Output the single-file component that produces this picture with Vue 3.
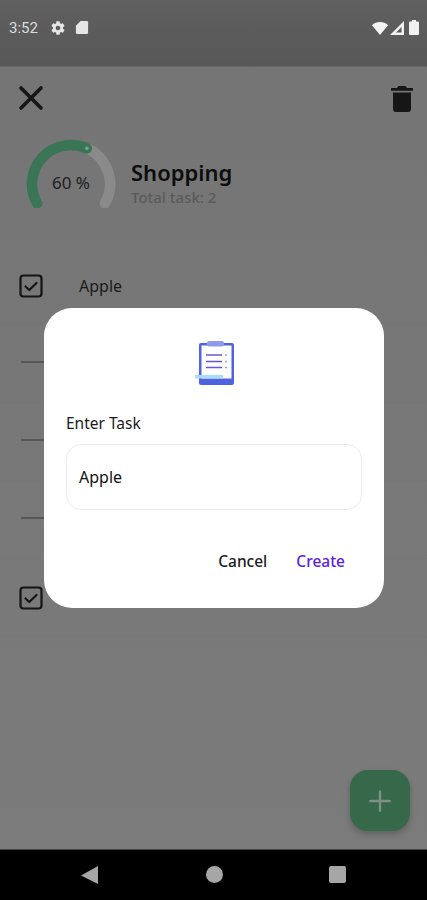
<script setup>
const rows = ['check', 'dash', 'dash', 'dash', 'check']
</script>

<template>
  <div class="phone">
    <header class="status">
      <span class="time">3:52</span>
      <svg class="ic gear" viewBox="0 0 24 24" width="16" height="16"><path fill="#e6e6e6" d="M19.4 13c.04-.33.06-.66.06-1s-.02-.67-.06-1l2.1-1.65c.2-.15.25-.42.12-.64l-2-3.46c-.12-.22-.38-.3-.6-.22l-2.5 1c-.52-.4-1.08-.73-1.7-.98l-.37-2.65A.5.5 0 0 0 14 2h-4a.5.5 0 0 0-.49.42L9.13 5.07c-.62.25-1.18.59-1.7.98l-2.5-1a.5.5 0 0 0-.6.22l-2 3.46c-.13.22-.07.49.12.64L4.55 11c-.04.33-.07.66-.07 1s.03.67.07 1l-2.1 1.65c-.2.15-.25.42-.12.64l2 3.46c.12.22.38.3.6.22l2.5-1c.52.4 1.08.73 1.7.98l.38 2.65c.04.24.25.42.49.42h4c.24 0 .45-.18.49-.42l.38-2.65c.62-.25 1.18-.59 1.7-.98l2.5 1c.22.08.48 0 .6-.22l2-3.46a.5.5 0 0 0-.12-.64L19.4 13zM12 15.5a3.5 3.5 0 1 1 0-7 3.5 3.5 0 0 1 0 7z"/></svg>
      <svg class="ic sd" viewBox="0 0 14 16" width="14" height="15"><path fill="#e6e6e6" d="M5.5 1H12a1.5 1.5 0 0 1 1.500 1.500v11A1.500 1.500 0 0 1 12 15H2a1.500 1.500 0 0 1-1.500-1.500V6z"/></svg>
      <span class="grow"></span>
      <svg class="wifi" viewBox="0 0 16 13" width="16" height="13"><path fill="#f2f2f2" d="M0 3.200C2 1.200 5 0 8 0s6 1.200 8 3.200L8 13z"/></svg>
      <svg class="signal" viewBox="0 0 14 14" width="14" height="14"><path fill="#f2f2f2" d="M14 0v14H0z"/><path fill="#5a5a5a" d="M11.500 6v5.500H6z"/></svg>
      <svg class="battery" viewBox="0 0 10 15" width="10" height="15"><path fill="#f2f2f2" d="M3 0h4v1.500h2a1 1 0 0 1 1 1V14a1 1 0 0 1-1 1H1a1 1 0 0 1-1-1V2.500a1 1 0 0 1 1-1h2z"/></svg>
    </header>

    <main class="page">
      <div class="topbar">
        <svg viewBox="0 0 26 26" width="26" height="26"><path d="M3 3l20 20M23 3L3 23" stroke="#161616" stroke-width="3.600" stroke-linecap="round" fill="none"/></svg>
        <svg viewBox="0 0 24 28" width="24" height="28"><path fill="#161616" d="M8.500 1h7l1.500 2h6v2.800H1V3h6zM3 7.500h18V24a3 3 0 0 1-3 3H6a3 3 0 0 1-3-3z"/></svg>
      </div>

      <section class="summary">
        <div class="gauge">
          <svg viewBox="0 0 100 74" width="100" height="74">
            <path d="M65.900 14.400A39 39 0 0 1 83.800 69.500" fill="none" stroke="#8a8a8a" stroke-width="10.500" stroke-linecap="round"/>
            <path d="M16.200 69.500A39 39 0 0 1 65.900 14.400" fill="none" stroke="#3a7555" stroke-width="10.500" stroke-linecap="round"/>
            <circle cx="65.900" cy="14.400" r="1.800" fill="#7fa08e"/>
          </svg>
          <span class="pct">60 %</span>
        </div>
        <div class="titles">
          <h1>Shopping</h1>
          <p>Total task: 2</p>
        </div>
      </section>

      <ul class="rows">
        <li v-for="(row, i) in rows" :key="i" class="row">
          <svg v-if="row === 'check'" viewBox="0 0 24 24" width="24" height="24">
            <rect x="1.500" y="1.500" width="21" height="21" rx="3" fill="none" stroke="#141414" stroke-width="2.200"/>
            <path d="M6.500 12.500l3.800 3.500 7.200-7" fill="none" stroke="#141414" stroke-width="2.200" stroke-linecap="round" stroke-linejoin="round"/>
          </svg>
          <span v-else class="dash"></span>
          <span v-if="i === 0" class="label">Apple</span>
        </li>
      </ul>

      <button class="fab" aria-label="Add">
        <svg viewBox="0 0 24 24" width="22" height="22"><path d="M12 1.500v21M1.500 12h21" stroke="#7f9187" stroke-width="2.600" stroke-linecap="round"/></svg>
      </button>
    </main>

    <nav class="nav">
      <svg viewBox="0 0 18 18" width="18" height="18"><path fill="#a6a6a6" d="M17 0v18L0 9.500z"/></svg>
      <span class="dot"></span>
      <span class="square"></span>
    </nav>

    <div class="dialog">
      <svg class="clip" viewBox="0 0 39 44" width="39" height="44">
        <rect x="4" y="2" width="35" height="42" rx="2" fill="#4f62e0"/>
        <rect x="6.500" y="4.500" width="30" height="33" fill="#fff"/>
        <rect x="12" y="0" width="17" height="5.500" rx="2" fill="#8f9bea"/>
        <path d="M11 14h16M11 20.500h16M11 26.500h16" stroke="#6a55d8" stroke-width="1.500"/>
        <path d="M30 14h2M30 20.500h2M30 26.500h2" stroke="#9aa3ec" stroke-width="1.500"/>
        <rect x="0" y="34" width="28" height="3.500" fill="#a9dcf5"/>
      </svg>
      <label class="field-label">Enter Task</label>
      <div class="field">Apple</div>
      <div class="actions">
        <span class="cancel">Cancel</span>
        <span class="create">Create</span>
      </div>
    </div>
  </div>
</template>

<style>
html, body { margin: 0; padding: 0; background: #777; }
</style>

<style scoped>
* { box-sizing: border-box; }
.phone {
  position: relative;
  width: 427px;
  height: 900px;
  display: flex;
  flex-direction: column;
  overflow: hidden;
  font-family: "Noto Sans", "Open Sans", sans-serif;
  background: #787878;
}
.status {
  height: 67px;
  flex: none;
  display: flex;
  align-items: flex-start;
  padding: 19px 8px 0 9px;
  background: linear-gradient(#5f5f5f, #585858);
  border-bottom: 1px solid #666;
}
.time {
  font: 15px/18px Roboto, sans-serif;
  color: #dcdcdc;
  width: 41px;
}
.ic { margin-top: 1px; }
.sd { margin-left: 9px; }
.grow { flex: 1; }
.wifi { margin-top: 3px; }
.signal { margin: 2px 0 0 2px; }
.battery { margin: 1px 0 0 5px; }

.page {
  flex: 1;
  position: relative;
  display: flex;
  flex-direction: column;
  background: linear-gradient(#757575, #7b7b7b);
}
.topbar {
  display: flex;
  justify-content: space-between;
  align-items: flex-start;
  padding: 18px 13px 0 18px;
}
.summary {
  display: flex;
  align-items: flex-start;
  margin-top: 21px;
  padding-left: 21px;
}
.gauge {
  position: relative;
  width: 100px;
  height: 74px;
  flex: none;
}
.gauge svg { display: block; }
.pct {
  position: absolute;
  left: 0;
  right: 0;
  top: 38px;
  text-align: center;
  font-size: 17px;
  line-height: 22px;
  color: #1d1d1d;
}
.titles { margin: 23px 0 0 10px; }
h1 {
  margin: 0;
  font-size: 22px;
  line-height: 30px;
  font-weight: 600;
  color: #0d0d0d;
}
p {
  margin: 0;
  font-size: 15px;
  line-height: 20px;
  font-weight: 500;
  color: #5a5a5a;
}
.rows {
  list-style: none;
  margin: 39px 0 0;
  padding: 0;
}
.row {
  height: 78px;
  display: flex;
  align-items: center;
  padding-left: 19px;
  border-bottom: 1px solid rgba(0, 0, 0, 0.012);
}
.dash {
  display: block;
  width: 26px;
  height: 2px;
  margin: 0 0 4px 2px;
  background: #565656;
}
.label {
  margin-left: 36px;
  font-size: 16px;
  color: #1a1a1a;
}
.fab {
  position: absolute;
  left: 350px;
  top: 703px;
  width: 60px;
  height: 61px;
  border: 0;
  padding: 0;
  border-radius: 18px;
  background: #36694a;
  box-shadow: 0 3px 6px rgba(0, 0, 0, 0.22);
  display: flex;
  align-items: center;
  justify-content: center;
}
.nav {
  height: 51px;
  flex: none;
  display: flex;
  align-items: center;
  background: #000;
  border-top: 1px solid #444;
  padding-left: 81px;
  padding-bottom: 1px;
}
.dot {
  width: 17px;
  height: 17px;
  border-radius: 50%;
  background: #a6a6a6;
  margin-left: 107px;
}
.square {
  width: 17px;
  height: 17px;
  border-radius: 2px;
  background: #a6a6a6;
  margin-left: 106px;
}
.dialog {
  position: absolute;
  left: 44px;
  top: 308px;
  width: 340px;
  height: 300px;
  border-radius: 28px;
  background: #fff;
  padding: 33px 22px 0;
  display: flex;
  flex-direction: column;
}
.clip { align-self: center; display: block; }
.field-label {
  margin-top: 27px;
  font-size: 15.500px;
  line-height: 22px;
  color: #1b1b1b;
}
.field {
  margin-top: 10px;
  height: 66px;
  border: 1.500px solid #ececec;
  border-radius: 15px;
  padding: 0 12px;
  display: flex;
  align-items: center;
  font-size: 16px;
  color: #111;
}
.actions {
  display: flex;
  justify-content: flex-end;
  gap: 29px;
  margin-top: 39px;
  padding-right: 17px;
  font-size: 15.500px;
  line-height: 24px;
  font-weight: 500;
}
.cancel { color: #1c1c1c; }
.create { color: #5a22e0; }
</style>
